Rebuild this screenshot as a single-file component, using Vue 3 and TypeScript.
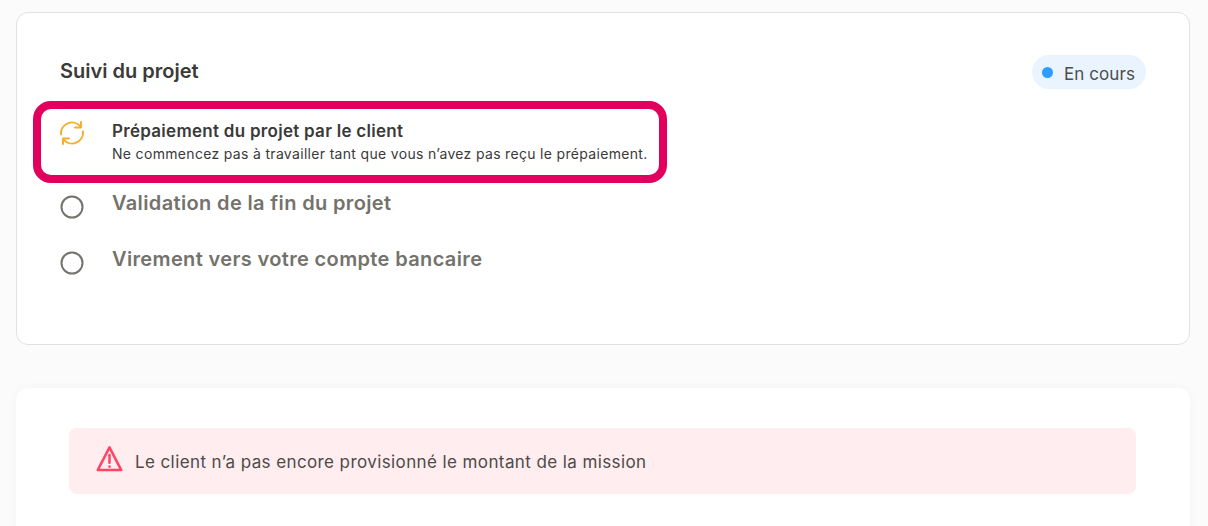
<script setup lang="ts">
interface Step {
  title: string;
  hint?: string;
  state: 'active' | 'todo';
}

const steps: Step[] = [
  {
    title: 'Prépaiement du projet par le client',
    hint: 'Ne commencez pas à travailler tant que vous n’avez pas reçu le prépaiement.',
    state: 'active',
  },
  { title: 'Validation de la fin du projet', state: 'todo' },
  { title: 'Virement vers votre compte bancaire', state: 'todo' },
];
</script>

<template>
  <div class="page">
    <section class="tracking">
      <header class="tracking-head">
        <h2 class="tracking-title">Suivi du projet</h2>
        <span class="badge"><i class="badge-dot"></i>En cours</span>
      </header>
      <ul class="steps">
        <li v-for="step in steps" :key="step.title" class="step" :class="`step-${step.state}`">
          <svg v-if="step.state === 'active'" class="step-icon" viewBox="0 0 24 24" fill="none" stroke="#f5ae2d" stroke-width="2" stroke-linecap="round" stroke-linejoin="round">
            <path d="M1 13.5A11 11 0 0 1 20.5 5.6" />
            <path d="M23 10.5A11 11 0 0 1 3.5 18.4" />
            <path d="M21 1v5.6h-6" />
            <path d="M3 23v-5.6h6" />
          </svg>
          <svg v-else class="step-icon step-icon-todo" viewBox="0 0 24 24" fill="none" stroke="#73726c" stroke-width="2">
            <circle cx="12" cy="12" r="10.5" />
          </svg>
          <div class="step-text">
            <div class="step-title">{{ step.title }}</div>
            <div v-if="step.hint" class="step-hint">{{ step.hint }}</div>
          </div>
          <div v-if="step.state === 'active'" class="highlight"></div>
        </li>
      </ul>
    </section>

    <section class="funding">
      <div class="alert">
        <svg class="alert-icon" viewBox="0 0 28 28" fill="none" stroke="#ff4564" stroke-width="2.6" stroke-linecap="round" stroke-linejoin="round">
          <path d="M14 2.5 1.8 26h24.4L14 2.5Z" />
          <path d="M14 10.5v8" />
          <path d="M14 22.4v.2" />
        </svg>
        <span class="alert-text">Le client n’a pas encore provisionné le montant de la mission</span>
      </div>
    </section>
  </div>
</template>

<style>
html,
body {
  margin: 0;
  background: #fbfbfb;
  overflow: hidden;
}
</style>

<style scoped>
.page {
  box-sizing: border-box;
  height: 526px;
  overflow: hidden;
  padding: 12px 18px 0 16px;
  font-family: Inter, "Liberation Sans", sans-serif;
  color: #3a3a38;
}
.tracking {
  box-sizing: border-box;
  height: 333px;
  padding: 42px 43px 0;
  background: #fff;
  border: 1px solid #e2e1db;
  border-radius: 12px;
}
.tracking-head {
  display: flex;
  justify-content: space-between;
  align-items: flex-start;
}
.tracking-title {
  margin: 4px 0 0;
  font-size: 20px;
  line-height: 24px;
  font-weight: 600;
}
.badge {
  display: flex;
  align-items: center;
  height: 34px;
  padding: 3px 11px 0 10px;
  box-sizing: border-box;
  border-radius: 17px;
  background: #e9f4ff;
  color: #4d4d4b;
  font-size: 17px;
  letter-spacing: 0.08px;
}
.badge-dot {
  width: 11px;
  height: 11px;
  margin: -3px 11px 0 0;
  border-radius: 50%;
  background: #2e9dff;
}
.steps {
  margin: 31px 0 0;
  padding: 0;
  list-style: none;
}
.step {
  position: relative;
  display: flex;
  gap: 28px;
}
.step-active {
  height: 70px;
}
.step-todo {
  height: 56px;
}
.step-icon {
  flex: none;
  width: 24px;
  height: 24px;
  margin-top: 1px;
}
.step-icon-todo {
  margin-top: 5px;
}
.step-title {
  font-size: 17px;
  line-height: 22px;
  font-weight: 600;
  letter-spacing: 0.28px;
}
.step-todo .step-title {
  padding-top: 1px;
  font-size: 20px;
  line-height: 24px;
  color: #73726c;
  letter-spacing: 0.36px;
}
.step-hint {
  margin-top: 2px;
  font-size: 14px;
  line-height: 20px;
  letter-spacing: 0.32px;
  color: #3a3a38;
}
.highlight {
  position: absolute;
  left: -27px;
  top: -19px;
  width: 634px;
  height: 82px;
  box-sizing: border-box;
  border: 8px solid #e2005f;
  border-radius: 18px;
  pointer-events: none;
}
.funding {
  margin-top: 43px;
  height: 200px;
  padding: 40px 54px 0 53px;
  background: #fff;
  border-radius: 12px;
  box-shadow: 0 0 12px rgba(0, 0, 0, 0.03);
}
.alert {
  display: flex;
  align-items: center;
  gap: 12px;
  height: 66px;
  padding-left: 27px;
  background: #ffedef;
  border-radius: 8px;
  color: #4d4a4a;
  font-size: 17px;
  letter-spacing: 0.4px;
}
.alert-text {
  padding-top: 2px;
}
.alert-icon {
  flex: none;
  width: 27px;
  height: 27px;
  margin-top: -6px;
}
</style>
